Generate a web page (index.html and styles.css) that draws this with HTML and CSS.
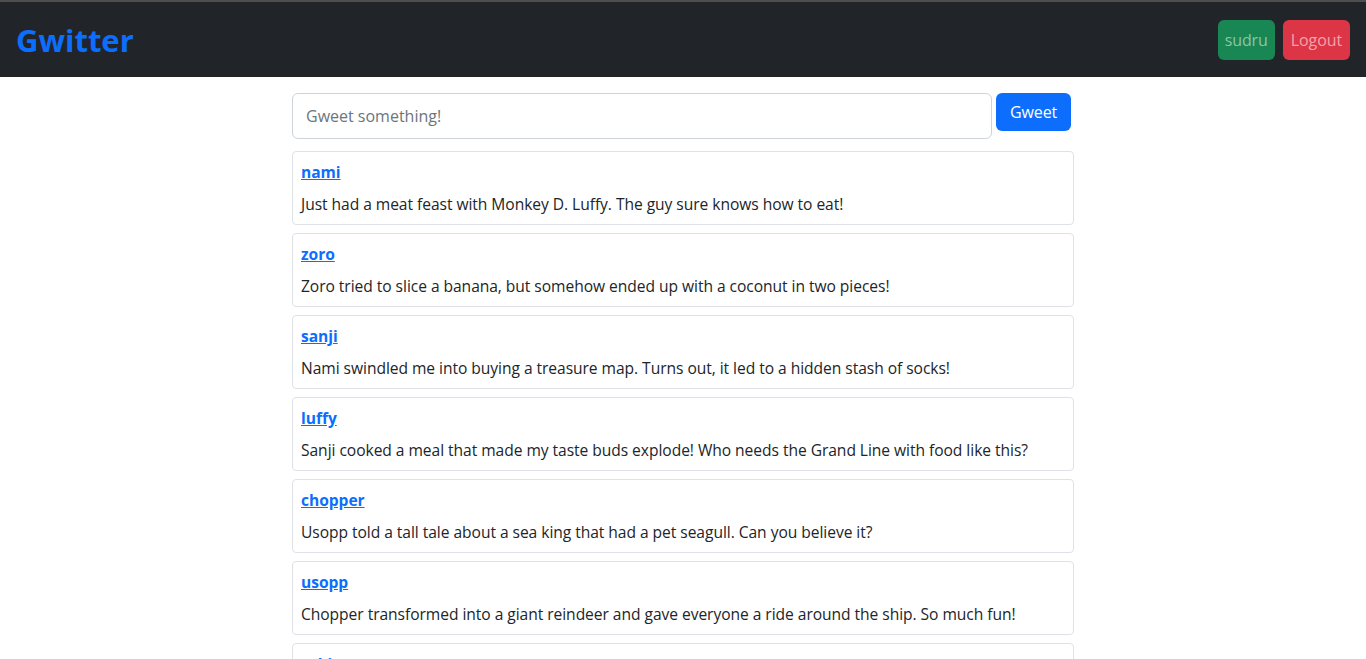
FILE: index.html
```html
<!DOCTYPE html>
<html lang="en">
<head>
<meta charset="utf-8">
<title>Gwitter</title>
<link rel="stylesheet" href="styles.css">
</head>
<body>
<nav class="navbar">
  <a class="brand" href="#">Gwitter</a>
  <div class="nav-actions">
    <button class="btn btn-success">sudru</button>
    <button class="btn btn-danger">Logout</button>
  </div>
</nav>
<main class="container">
  <form class="compose">
    <input class="compose-input" type="text" placeholder="Gweet something!">
    <button class="btn btn-primary" type="button">Gweet</button>
  </form>
  <div class="feed">
    <div class="card"><a class="user" href="#">nami</a><p class="text">Just had a meat feast with Monkey D. Luffy. The guy sure knows how to eat!</p></div>
    <div class="card"><a class="user" href="#">zoro</a><p class="text">Zoro tried to slice a banana, but somehow ended up with a coconut in two pieces!</p></div>
    <div class="card"><a class="user" href="#">sanji</a><p class="text">Nami swindled me into buying a treasure map. Turns out, it led to a hidden stash of socks!</p></div>
    <div class="card"><a class="user" href="#">luffy</a><p class="text">Sanji cooked a meal that made my taste buds explode! Who needs the Grand Line with food like this?</p></div>
    <div class="card"><a class="user" href="#">chopper</a><p class="text">Usopp told a tall tale about a sea king that had a pet seagull. Can you believe it?</p></div>
    <div class="card"><a class="user" href="#">usopp</a><p class="text">Chopper transformed into a giant reindeer and gave everyone a ride around the ship. So much fun!</p></div>
    <div class="card"><a class="user" href="#">robin</a><p class="text">Franky built a robot that dances better than all of us. Super!</p></div>
  </div>
</main>
</body>
</html>
```
FILE: styles.css
```css
* { box-sizing: border-box; }
html, body { margin: 0; padding: 0; }
body {
  font-family: "Open Sans", "Noto Sans", sans-serif;
  font-size: 15.6px;
  letter-spacing: -0.05px;
  color: #212529;
  background: #fff;
}
.navbar {
  border-top: 2px solid #4e4e4e;
  background: #212529;
  height: 77px;
  display: flex;
  align-items: center;
  justify-content: space-between;
  padding: 0 16px;
}
.brand {
  color: #0d6efd;
  font-weight: 700;
  font-size: 31px;
  text-decoration: none;
  letter-spacing: 0;
}
.nav-actions { display: flex; gap: 8px; }
.btn {
  font-family: inherit;
  font-size: 16px;
  line-height: 24px;
  letter-spacing: -0.1px;
  padding: 7px 7px;
  border: 1px solid transparent;
  border-radius: 6px;
  cursor: pointer;
}
.btn-success { background: #198754; color: #8cc5a6; padding: 7px 6px; }
.btn-danger { background: #dc3545; color: #f3a3ab; }
.btn-primary { background: #0d6efd; color: #fff; padding: 6px 13px; }
.container {
  width: 782px;
  margin: 0 auto;
  padding-top: 16px;
}
.compose { display: flex; gap: 4px; align-items: flex-start; margin: 0 0 12px; }
.compose-input {
  flex: 0 0 700px;
  height: 46px;
  border: 1px solid #ced4da;
  border-radius: 6px;
  padding: 0 13px;
  font-family: inherit;
  font-size: 16px;
  color: #212529;
}
.compose-input::placeholder { color: #6c757d; }
.feed { display: flex; flex-direction: column; gap: 8px; }
.card {
  border: 1px solid #dee2e6;
  border-radius: 4px;
  padding: 7px 8px 8px 8px;
  height: 74px;
}
.user {
  display: block;
  width: max-content;
  color: #0d6efd;
  font-weight: 700;
  text-decoration: underline;
  line-height: 24px;
  margin-top: 1px;
}
.text { margin: 8px 0 0; line-height: 24px; }
```
